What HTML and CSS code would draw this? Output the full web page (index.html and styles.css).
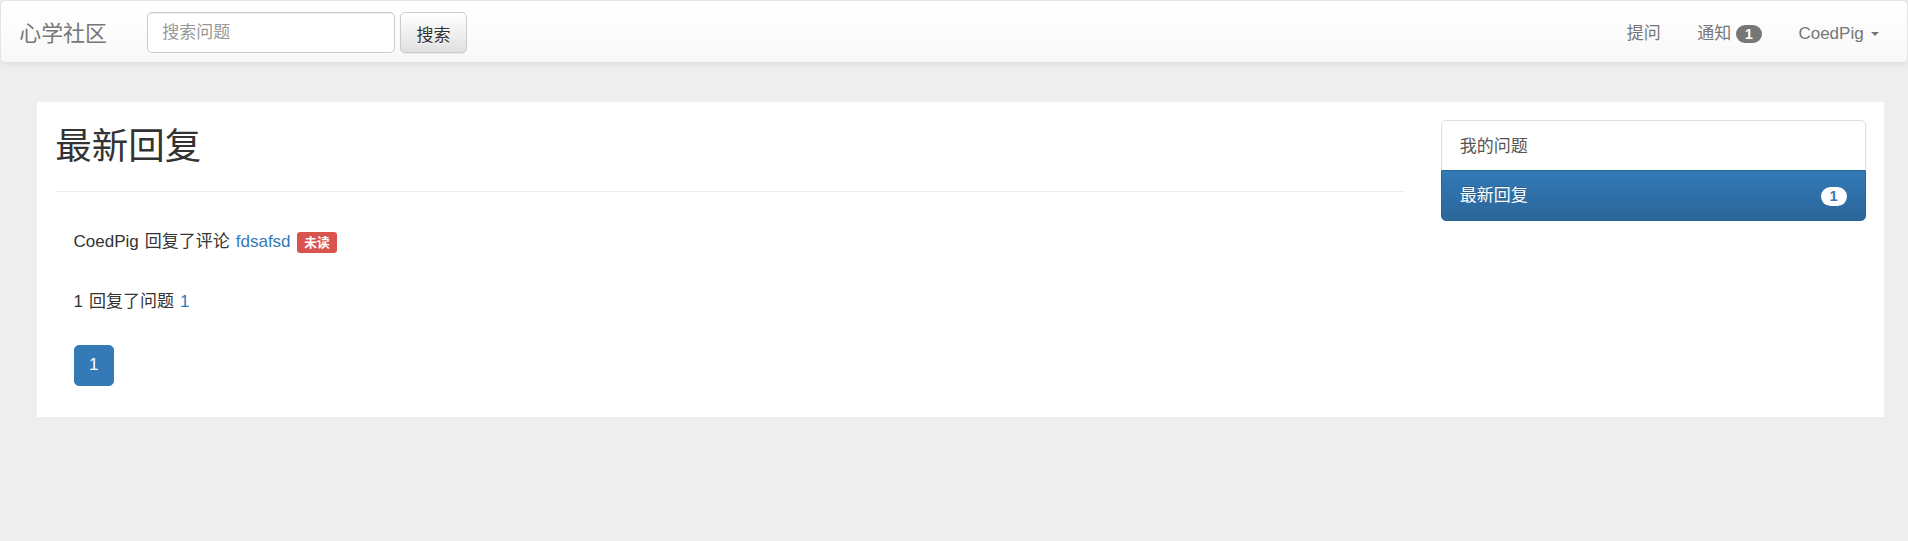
FILE: index.html
```html
<!DOCTYPE html>
<html lang="zh-CN">
<head>
<meta charset="utf-8">
<title>心学社区</title>
<link rel="stylesheet" href="styles.css">
</head>
<body>
<nav class="navbar">
  <a class="brand" href="#">心学社区</a>
  <form class="search">
    <input class="search-input" type="text" placeholder="搜索问题">
    <button class="btn" type="button">搜索</button>
  </form>
  <ul class="nav-right">
    <li><a class="nav-link" href="#">提问</a></li>
    <li><a class="nav-link" href="#">通知 <span class="badge">1</span></a></li>
    <li><a class="nav-link" href="#">CoedPig <span class="caret"></span></a></li>
  </ul>
</nav>
<main class="main">
  <section class="content">
    <h2 class="title">最新回复</h2>
    <hr class="divider">
    <div class="item">CoedPig 回复了评论 <a href="#">fdsafsd</a> <span class="label">未读</span></div>
    <div class="item">1 回复了问题 <a href="#">1</a></div>
    <div class="pager"><a class="page" href="#">1</a></div>
  </section>
  <aside class="sidebar">
    <div class="list-group">
      <a class="list-item" href="#">我的问题</a>
      <a class="list-item active" href="#"><span>最新回复</span><span class="badge badge-light">1</span></a>
    </div>
  </aside>
</main>
</body>
</html>
```
FILE: styles.css
```css
* { box-sizing: border-box; }
html, body { margin: 0; padding: 0; }
body {
  background: #eee;
  font-family: "Liberation Sans", Arial, "Noto Sans CJK SC", sans-serif;
  font-size: 17px;
  line-height: 24.3px;
  color: #333;
}
a { text-decoration: none; color: #337ab7; }

/* navbar */
.navbar {
  display: flex;
  align-items: center;
  height: 63px;
  padding: 2px 10px 0 0;
  border: 1px solid #e4e4e4;
  border-radius: 5px;
  background: linear-gradient(to bottom, #fff 0, #f8f8f8 100%);
  box-shadow: inset 0 1px 0 rgba(255,255,255,.15), 0 1px 6px rgba(0,0,0,.08);
}
.brand {
  display: block;
  padding: 19.5px 18.25px 17px;
  font-size: 21.9px;
  line-height: 24.3px;
  color: #777;
}
.search {
  display: flex;
  align-items: center;
  gap: 5.3px;
  margin: 0 0 0 21.6px;
}
.search-input {
  width: 248px;
  height: 41px;
  padding: 7.3px 14.6px;
  border: 1px solid #ccc;
  border-radius: 5px;
  font-family: inherit;
  font-size: 17px;
  color: #555;
  background: #fff;
  box-shadow: inset 0 1px 1px rgba(0,0,0,.075);
  outline: none;
}
.search-input::placeholder { color: #999; }
.btn {
  height: 40.5px;
  padding: 1px 15.5px 0;
  border: 1px solid #ccc;
  border-radius: 5px;
  font-family: inherit;
  font-size: 17px;
  color: #333;
  text-shadow: 0 1px 0 #fff;
  background: linear-gradient(to bottom, #fff 0, #e0e0e0 100%);
  box-shadow: inset 0 1px 0 rgba(255,255,255,.15), 0 1px 1px rgba(0,0,0,.075);
}
.nav-right {
  display: flex;
  margin: 0 0 0 auto;
  padding: 0;
  list-style: none;
}
.nav-link {
  display: block;
  padding: 19.5px 18.25px 17px;
  line-height: 24.3px;
  color: #777;
}
.badge {
  display: inline-block;
  min-width: 26px;
  height: 18.5px;
  padding: 0 8.5px;
  font-size: 14.6px;
  font-weight: bold;
  line-height: 18.5px;
  color: #fff;
  background: #777;
  border-radius: 12px;
  vertical-align: middle;
  text-align: center;
}
.caret {
  display: inline-block;
  width: 0;
  height: 0;
  margin-left: 2.4px;
  vertical-align: middle;
  border-top: 4.9px solid #777;
  border-left: 4.9px solid transparent;
  border-right: 4.9px solid transparent;
}

/* main */
.main {
  display: flex;
  margin: 39px 24px 0 37px;
  background: #fff;
}
.content {
  width: 75%;
  padding: 0 18.25px;
}
.title {
  margin: 25.8px 0 12.2px;
  font-size: 36.5px;
  line-height: 38.7px;
  font-weight: 400;
  color: #333;
}
.divider {
  margin: 24.3px 0;
  border: 0;
  border-top: 1px solid #eee;
}
.item {
  padding: 13.5px 18.25px 10.9px;
  margin-bottom: 12.2px;
  word-spacing: 1.3px;
}
.label {
  padding: .2em .6em .3em;
  font-size: 75%;
  font-weight: bold;
  line-height: 1;
  color: #fff;
  background: #d9534f;
  border-radius: .25em;
  word-spacing: 0;
}
.pager {
  display: flex;
  padding: 7.2px 18.25px 31.3px;
}
.page {
  display: block;
  padding: 7.3px 14.6px;
  line-height: 24.3px;
  color: #fff;
  background: #337ab7;
  border: 1px solid #337ab7;
  border-radius: 5px;
}

/* sidebar */
.sidebar {
  width: 25%;
  padding: 0 18.25px;
}
.list-group {
  margin-top: 18.3px;
  border-radius: 5px;
}
.list-item {
  display: flex;
  justify-content: space-between;
  align-items: center;
  padding: 13.5px 18.25px 10.9px;
  margin-bottom: -1px;
  border: 1px solid #ddd;
  color: #555;
  background: #fff;
}
.list-item:first-child { border-radius: 5px 5px 0 0; }
.list-item:last-child { border-radius: 0 0 5px 5px; }
.list-item.active {
  color: #fff;
  text-shadow: 0 -1px 0 #286090;
  background: linear-gradient(to bottom, #337ab7 0, #2b669a 100%);
  border-color: #2b669a;
}
.badge-light {
  color: #337ab7;
  background: #fff;
  text-shadow: none;
}
```
